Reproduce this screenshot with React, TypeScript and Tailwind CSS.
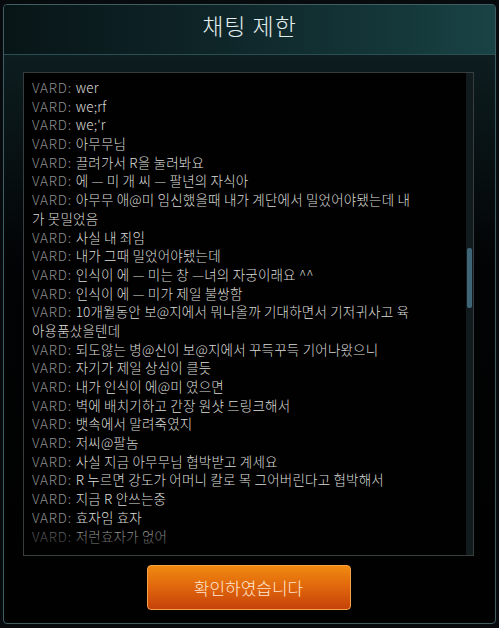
const lines: { msg: string; cont?: boolean }[] = [
  { msg: 'wer' },
  { msg: 'we;rf' },
  { msg: "we;'r" },
  { msg: '아무무님' },
  { msg: '끌려가서 R을 눌러봐요' },
  { msg: '에 — 미 개 씨 — 팔년의 자식아' },
  { msg: '아무무 애@미 임신했을때 내가 계단에서 밀었어야됐는데 내' },
  { msg: '가 못밀었음', cont: true },
  { msg: '사실 내 죄임' },
  { msg: '내가 그때 밀었어야됐는데' },
  { msg: '인식이 에 — 미는 창 —녀의 자궁이래요 ^^' },
  { msg: '인식이 에 — 미가 제일 불쌍함' },
  { msg: '10개월동안 보@지에서 뭐나올까 기대하면서 기저귀사고 육' },
  { msg: '아용품샀을텐데', cont: true },
  { msg: '되도않는 병@신이 보@지에서 꾸득꾸득 기어나왔으니' },
  { msg: '자기가 제일 상심이 클듯' },
  { msg: '내가 인식이 에@미 였으면' },
  { msg: '벽에 배치기하고 간장 원샷 드링크해서' },
  { msg: '뱃속에서 말려죽였지' },
  { msg: '저씨@팔놈' },
  { msg: '사실 지금 아무무님 협박받고 계세요' },
  { msg: 'R 누르면 강도가 어머니 칼로 목 그어버린다고 협박해서' },
  { msg: '지금 R 안쓰는중' },
  { msg: '효자임 효자' },
  { msg: '저런효자가 없어' },
];

export default function App() {
  return (
    <div
      className="w-[499px] h-[628px] bg-[#070b0e] pt-[4px] pl-[3px] overflow-hidden font-light"
      style={{ fontFamily: '"Noto Sans CJK KR", "Noto Sans", sans-serif' }}
    >
      <div className="w-[493px] h-[620px] rounded-[4px] border border-[#3f5f63] bg-[linear-gradient(180deg,#0f2326_0px,#0a1618_110px,#020304_260px,#010101_100%)] flex flex-col overflow-hidden">
        {/* header */}
        <div className="h-[50px] shrink-0 border-b border-[#2b5054] bg-[linear-gradient(90deg,#081517_0%,#0f2629_45%,#153a3c_85%,#1a4345_100%)] flex items-start justify-center">
          <span className="mt-[9px] text-[23px] leading-none text-[#e4eded] tracking-[1px]">채팅 제한</span>
        </div>

        {/* chat log */}
        <div className="mt-[17px] ml-[19px] w-[451px] h-[484px] shrink-0 border border-[#383d3f] bg-[#010101] flex relative overflow-hidden">
          <div className="flex-1 pl-[8px] pt-[5px] overflow-hidden">
            {lines.map((l, i) => (
              <div key={i} className="h-[18.7px] leading-[18.7px] text-[13.5px] tracking-[0.2px] whitespace-nowrap">
                {!l.cont && <span className="text-[#8b8e8f] tracking-[0.8px]">VARD: </span>}
                <span className="text-[#dcdcd8]">{l.msg}</span>
              </div>
            ))}
          </div>
          <div className="absolute left-0 right-[8px] bottom-0 h-[34px] bg-[linear-gradient(180deg,rgba(1,1,1,0)_0%,rgba(1,1,1,0.5)_50%,rgba(1,1,1,0.85)_100%)]" />
          <div className="w-[7px] shrink-0 bg-[#111a1c] relative">
            <div className="absolute left-[1px] top-[175px] w-[5px] h-[60px] rounded-[2px] bg-[#3e6676]" />
          </div>
        </div>

        {/* button */}
        <div className="flex justify-center mt-[9px] pr-[2px]">
          <button className="w-[204px] h-[45px] rounded-[4px] border border-[#f5a24a] bg-[linear-gradient(180deg,#f08a10_0%,#e0650c_50%,#c5420a_100%)] text-[17px] text-[#ffe6cf]">
            확인하였습니다
          </button>
        </div>
      </div>
    </div>
  );
}
